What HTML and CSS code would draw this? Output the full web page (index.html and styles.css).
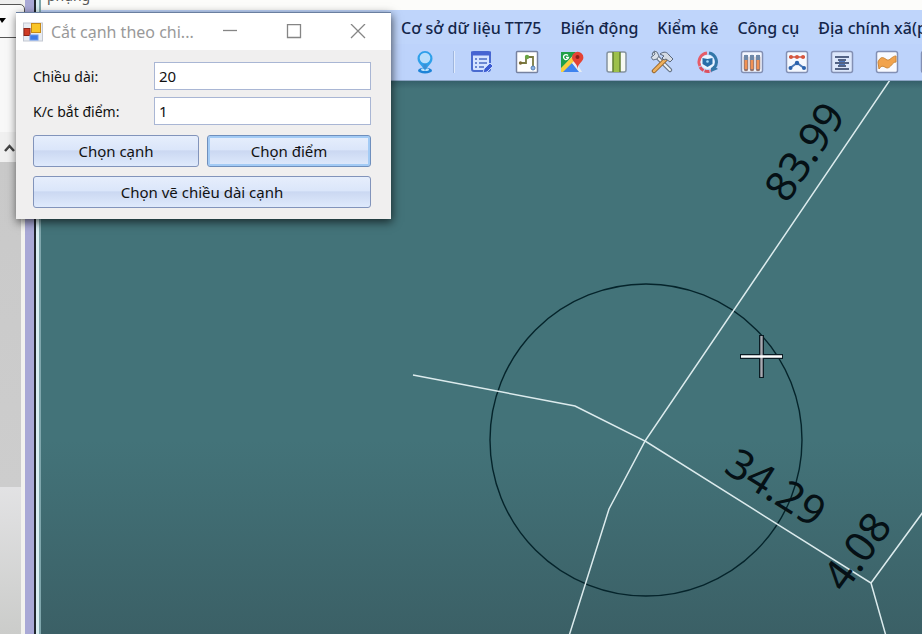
FILE: index.html
```html
<!DOCTYPE html>
<html lang="vi">
<head>
<meta charset="utf-8">
<title>Cắt cạnh theo chiều dài</title>
<link rel="stylesheet" href="styles.css">
</head>
<body>
<div class="app">
  <aside class="side">
    <button class="side-drop" aria-label="Danh sách"><svg width="8" height="6" viewBox="0 0 8 6"><path d="M0 0h7L3 5z"/></svg></button>
    <div class="side-page"></div>
    <button class="side-up" aria-label="Cuộn lên"><svg width="11" height="9" viewBox="0 0 11 9"><path d="M1 8l4.500-5L10 8" fill="none" stroke="#444" stroke-width="2.500"/></svg></button>
    <div class="side-thumb"></div>
  </aside>
  <div class="splitter"></div>
  <main class="main">
    <div class="strip"><span>phụng</span></div>
    <nav class="menu">
      <a href="#">Cơ sở dữ liệu TT75</a>
      <a href="#">Biến động</a>
      <a href="#">Kiểm kê</a>
      <a href="#">Công cụ</a>
      <a href="#">Địa chính xã(phường)</a>
    </nav>
    <div class="tools">
      <button aria-label="Vị trí"><svg viewBox="0 0 24 24"><ellipse cx="12" cy="20.500" rx="7" ry="3" fill="#1d83d8"/><ellipse cx="12" cy="19.500" rx="4" ry="1.500" fill="#bfe2fb"/><path d="M12 21c-1-4-7.500-7-7.500-12.500a7.500 7.500 0 0 1 15 0C19.500 14 13 17 12 21z" fill="#2fa0ea"/><circle cx="12" cy="8" r="5.300" fill="#b9defc"/><path d="M10.500 14h3v5h-3z" fill="#3b8fd4"/></svg></button>
      <span class="sep"></span>
      <button aria-label="Biểu mẫu"><svg viewBox="0 0 24 24"><rect x="2" y="2" width="18" height="19" rx="2" fill="#d5e3ff" stroke="#4a6bd0" stroke-width="2"/><path d="M1 1.500h20v4H1z" fill="#4664d2"/><path d="M5 9h2m2 0h8M5 13h2m2 0h8M5 17h2m2 0h5" stroke="#4a6bc4" stroke-width="1.500"/><path d="M13 23l1-4 6-6 3 3-6 6z" fill="#3c5bd2" stroke="#c5d8ff"/></svg></button>
      <button aria-label="Sơ đồ nối"><svg viewBox="0 0 24 24"><rect x="1.500" y="1.500" width="21" height="21" rx="1" fill="#fff" stroke="#7782a0" stroke-width="1.500"/><path d="M5 13h6V7M14 7h4v10" fill="none" stroke="#7a7a42" stroke-width="1.800"/><circle cx="5.500" cy="13" r="1.700" fill="#7d6a35"/><circle cx="12" cy="7" r="2.200" fill="#6aa544"/><circle cx="18" cy="18" r="2" fill="#8db4e5" stroke="#577fb4"/></svg></button>
      <button aria-label="Bản đồ"><svg viewBox="0 0 24 24"><path d="M1 2h15L1 19z" fill="#20a048"/><path d="M1 22V18L14 5l4 4L4 22z" fill="#f8cf3c"/><path d="M3 22l9-9 8 9z" fill="#3e83ef"/><path d="M12 13l3-3 7 12h-3z" fill="#e7edf3"/><path d="M17.500 19c0-6-5.500-7-5.500-11.500a5.700 5.700 0 0 1 11.400 0c0 4.500-5.500 5.500-5.900 11.500z" fill="#e44335"/><circle cx="17.500" cy="7" r="2" fill="#8c201c"/><path d="M8 5.500a2.500 2.500 0 1 0 .5 2H6" fill="none" stroke="#fff" stroke-width="1.300"/></svg></button>
      <button aria-label="Cột"><svg viewBox="0 0 24 24"><rect x="2" y="2" width="19" height="20" rx="2" fill="#f6f9f2" stroke="#8593a0" stroke-width="1.500"/><path d="M8 2h7v20H8z" fill="#9dc04a"/><path d="M8 2v20M15 2v20" stroke="#607e32" stroke-width="1.500"/></svg></button>
      <button aria-label="Dụng cụ"><svg viewBox="0 0 24 24"><path d="M4 4l16 16" stroke="#697789" stroke-width="4.500" stroke-linecap="round"/><path d="M4 4l16 16" stroke="#eef2f7" stroke-width="2" stroke-linecap="round"/><path d="M1 7l2 3 4-1 2-3-2-4-3-1 1 3-2 2z" fill="#d9e0e9" stroke="#697789"/><path d="M4 21L16 9" stroke="#93632b" stroke-width="4.500" stroke-linecap="round"/><path d="M4 21L16 9" stroke="#eeb15e" stroke-width="2.500" stroke-linecap="round"/><path d="M10 4c4-3 7-2 9 1l4 4-3 3-4-3-2 1-2-2 2-2z" fill="#d4dbe4" stroke="#59677b"/></svg></button>
      <button aria-label="Cập nhật"><svg viewBox="0 0 24 24"><path d="M12 3a9 9 0 0 0-7 13" fill="none" stroke="#e65c68" stroke-width="3"/><path d="M5 17a9 9 0 0 0 11 4" fill="none" stroke="#dc505e" stroke-width="3" stroke-dasharray="5 1"/><path d="M14 3a9 9 0 0 1 5 15" fill="none" stroke="#3377a8" stroke-width="3"/><path d="M16 14l7 5-7 3z" fill="#3377a8"/><circle cx="12.500" cy="12" r="7" fill="#e9f5ff"/><path d="M7.500 8l5 1 5-1v6l-5 3-5-3z" fill="#286ea9"/><circle cx="12.500" cy="11.500" r="1.300" fill="#a5dcf9"/></svg></button>
      <button aria-label="Ống mẫu"><svg viewBox="0 0 24 24"><rect x="1.500" y="1.500" width="21" height="21" rx="2" fill="#f2f6ff" stroke="#8390b4" stroke-width="1.500"/><path d="M6 7v12M12 7v12M18 7v12" stroke="#96766e" stroke-width="4.500" stroke-linecap="round"/><path d="M6 8v11M12 8v11M18 8v11" stroke="#f19154" stroke-width="2.500"/><path d="M6 5v5M12 5v5M18 5v5" stroke="#6e88a8" stroke-width="4"/></svg></button>
      <button aria-label="Đường điểm"><svg viewBox="0 0 24 24"><rect x="1.500" y="1.500" width="21" height="21" rx="2" fill="#f4f8ff" stroke="#8390b4" stroke-width="1.500"/><path d="M4 7h16" stroke="#c9554b" stroke-width="1.500"/><g fill="#d7563d"><circle cx="6" cy="7" r="2"/><circle cx="12" cy="7" r="2"/><circle cx="18" cy="7" r="2"/></g><path d="M5 18l7-5 7 5" fill="none" stroke="#4a78b9" stroke-width="2"/><g fill="#2a62ae"><circle cx="5.500" cy="18" r="2"/><circle cx="12" cy="13" r="2.200"/><circle cx="19" cy="18" r="2"/></g></svg></button>
      <button aria-label="Căn chữ"><svg viewBox="0 0 24 24"><rect x="1.500" y="1.500" width="21" height="21" rx="2" fill="#dce7fb" stroke="#8390b4" stroke-width="1.500"/><path d="M5 7h14M8 10h8M5 13h14M8 16h8M5 19h14" stroke="#26395f" stroke-width="1.500"/><path d="M9 11.500h6M9 14.500h6" stroke="#4d77bd"/></svg></button>
      <button aria-label="Bề mặt"><svg viewBox="0 0 24 24"><rect x="1.500" y="1.500" width="21" height="21" rx="2" fill="#f8faff" stroke="#8390b4" stroke-width="1.500"/><path d="M3 12c3-7 6-4 9-2 3 1 5-4 9-4v6c-4 0-5 6-9 6-3-1-5-4-8 1z" fill="#f1a34d" stroke="#cc8738"/></svg></button>
      <button aria-label="Thêm"><svg viewBox="0 0 24 24"><rect x="1.500" y="1.500" width="21" height="21" rx="2" fill="#f8faff" stroke="#8390b4" stroke-width="1.500"/></svg></button>
    </div>
    <div class="canvas">
      <svg class="drawing" viewBox="41 81 881 553" preserveAspectRatio="xMinYMin slice" role="img" aria-label="Bản vẽ">
        <circle cx="646" cy="440" r="156" fill="none" stroke="#05242b" stroke-width="1.400"/>
        <g class="edges">
          <path d="M413 375L575 406L645 441L609 509L569 636"/>
          <path d="M890 80L645 441L871 583L886 636M871 583L923 512"/>
        </g>
        <g class="dims">
          <text transform="translate(817 160) rotate(-56)">83.99</text>
          <text transform="translate(768 500) rotate(32)">34.29</text>
          <text transform="translate(869 560) rotate(-54)">4.08</text>
        </g>
        <path d="M740 356.500h43M761.500 335v43" stroke="#0b1c24" stroke-width="5"/>
        <path d="M761.500 336v41" stroke="#a9a9b1" stroke-width="2.400"/>
        <path d="M741 356.500h41" stroke="#fff" stroke-width="2.400"/>
      </svg>
    </div>
  </main>
</div>

<form class="dialog">
  <header class="title">
    <svg class="logo" width="20" height="20" viewBox="0 0 20 20"><rect x=".5" y="1" width="19" height="18" fill="#e8ecf2" stroke="#c3c8d2"/><rect x="8.500" y="1.500" width="9" height="9" fill="#f9c526" stroke="#c78a18"/><rect x="1" y="6.500" width="6" height="7" fill="#cf3a24" stroke="#8d2417"/><rect x="7" y="13" width="8" height="5" fill="#3f7be6" stroke="#6c9af0"/></svg>
    <h1>Cắt cạnh theo chi...</h1>
    <button type="button" aria-label="Thu nhỏ"><svg width="16" height="16" viewBox="0 0 16 16"><path d="M1 6.500h14"/></svg></button>
    <button type="button" aria-label="Phóng to"><svg width="16" height="16" viewBox="0 0 16 16"><path d="M1.500 .5h13v13h-13z"/></svg></button>
    <button type="button" aria-label="Đóng"><svg width="16" height="16" viewBox="0 0 16 16"><path d="M1 0l14 14M15 0L1 14"/></svg></button>
  </header>
  <div class="fields">
    <label for="len">Chiều dài:</label><input id="len" type="text" value="20">
    <label for="snap">K/c bắt điểm:</label><input id="snap" type="text" value="1">
  </div>
  <div class="actions">
    <button type="button">Chọn cạnh</button>
    <button type="button" class="focus">Chọn điểm</button>
    <button type="button" class="wide">Chọn vẽ chiều dài cạnh</button>
  </div>
</form>
</body>
</html>
```

FILE: styles.css
```css
* { box-sizing: border-box; }
body { margin: 0; font-family: "Noto Sans", "Open Sans", sans-serif; overflow: hidden; }
button { font: inherit; padding: 0; border: 0; background: none; }
svg { display: block; }

.app { display: flex; height: 100vh; }
.side {
  flex: 0 0 25px;
  display: flex;
  flex-direction: column;
  background: linear-gradient(#eee, #e4e4e6 75%, #cbccca);
  border-right: 4px solid #f2f2ee;
}
.side-drop { height: 34px; margin: 4px -4px 0 -8px; padding-left: 6px; background: #fafafa; border: 1px solid #555; border-radius: 0 5px 5px 0; }
.side-page { height: 94px; background: #f8f8f8; }
.side-up { height: 30px; padding-left: 4px; background: #f0f0f0; }
.side-thumb { height: 325px; background: linear-gradient(#c9c9c9, #cdcdcd); }
.splitter { flex: 0 0 16px; background: linear-gradient(90deg, #a9a9d6 9px, #20262e 9px 11px, #d8eef2 11px 14px, #7fa6ac 14px); }

.main { flex: 1; min-width: 0; display: flex; flex-direction: column; }
.strip { height: 10px; padding-left: 6px; overflow: hidden; background: #fcfcfa; color: #555; font-size: 14px; line-height: 0; }
.strip span { display: block; margin-top: -4px; }
.menu { display: flex; gap: 19px; height: 34px; padding-left: 360px; overflow: hidden; background: #bfd5fb; white-space: nowrap; }
.menu a { flex: none; color: #14264a; font-size: 16px; font-weight: 500; line-height: 36px; text-decoration: none; }
.tools { display: flex; align-items: center; gap: 21px; height: 37px; padding-left: 372px; overflow: hidden; background: #bdd3fb; border-bottom: 1px solid #8ba4c4; }
.tools button { flex: none; width: 24px; height: 24px; }
.tools .sep { flex: none; width: 2px; height: 22px; margin: 0 -6px 0 -5px; background: #dfeafc; border-left: 1px solid #9fb6de; }

.canvas { flex: 1; min-height: 0; background: linear-gradient(#35606a, #437379 8px, #437379 65%, #3b6066); }
.drawing { width: 100%; height: 100%; }
.edges { fill: none; stroke: #dcebed; stroke-width: 1.5px; }
.dims { fill: #051015; font-size: 42px; text-anchor: middle; }

.dialog { position: absolute; left: 16px; top: 12px; width: 375px; padding-bottom: 11px; background: #f0efef; border-top: 1px solid #6a7fa0; box-shadow: 1px 3px 9px rgba(0, 0, 0, .65); }
.title { display: flex; align-items: center; height: 37px; padding: 0 25px 0 7px; background: #fff; }
.title h1 { flex: 1; margin: 0 0 0 8px; color: #999; font-size: 16px; font-weight: 400; line-height: 20px; white-space: nowrap; }
.title button { margin-left: 48px; }
.title h1 + button { margin-left: 0; }
.title button path { fill: none; stroke: #858585; stroke-width: 1.3px; }

.fields { display: grid; grid-template-columns: 121px 1fr; gap: 7px 0; align-items: center; padding: 12px 20px 0 17px; color: #111; font-size: 14px; }
.fields input { width: 100%; height: 28px; padding: 0 4px; border: 1px solid #a9b6d4; background: #fff; color: #111; font: inherit; font-size: 15px; }
.actions { display: grid; grid-template-columns: 166px 1fr; gap: 9px 8px; padding: 10px 20px 0 17px; }
.actions button { height: 32px; border: 1px solid #8294bb; border-radius: 3px; background: linear-gradient(#e6eefc, #dbe6fa 45%, #cbd8f2 50%, #dfeafc); color: #111; font-size: 15px; }
.actions .focus { border-color: #6f8fbd; box-shadow: inset 0 0 0 2px #a3cbf5; }
.actions .wide { grid-column: 1 / -1; }
```
